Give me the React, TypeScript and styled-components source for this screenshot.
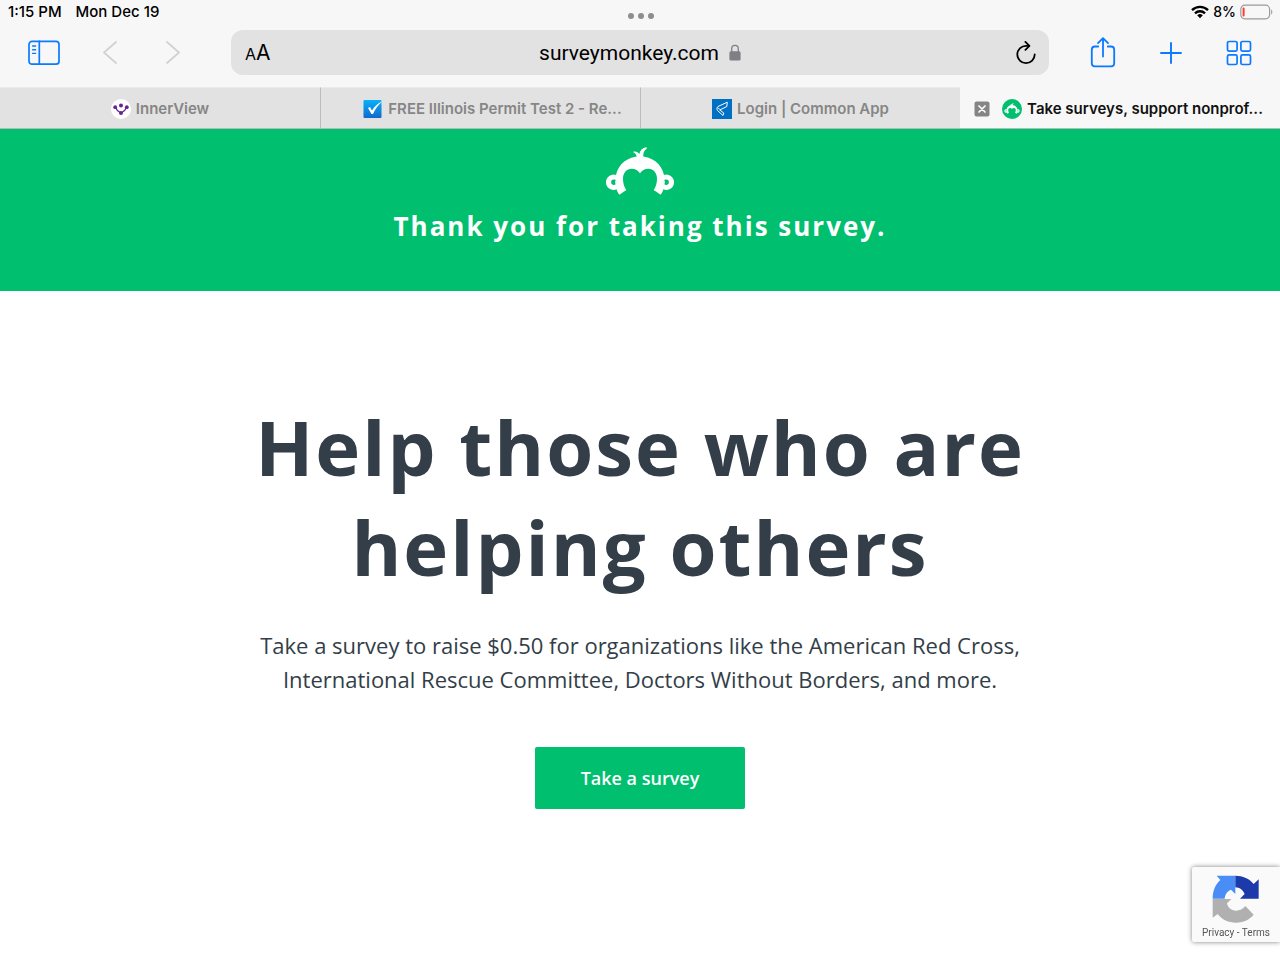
import React from "react";
import styled, { createGlobalStyle } from "styled-components";

const GlobalStyle = createGlobalStyle`
  * { box-sizing: border-box; }
  body {
    margin: 0;
    background: #ffffff;
    color: #333e48;
    font-family: "Open Sans", "Noto Sans", sans-serif;
  }
  button { font: inherit; border: 0; padding: 0; cursor: pointer; }
  svg { flex: none; }
`;

const uiFont = `Inter, "Liberation Sans", sans-serif`;

const Page = styled.div`
  display: flex;
  flex-direction: column;
  min-height: 100vh;
`;

const Chrome = styled.header`
  background: #f7f7f7;
  font-family: ${uiFont};
  color: #000000;
`;

const StatusBar = styled.div`
  display: grid;
  grid-template-columns: 1fr auto 1fr;
  align-items: center;
  height: 24px;
  padding: 0 7px 0 8px;
  font-size: 15px;
  font-weight: 500;
  line-height: 24px;
`;

const StatusGroup = styled.div<{ $end?: boolean }>`
  display: flex;
  align-items: center;
  justify-content: ${(p) => (p.$end ? "flex-end" : "flex-start")};
  gap: ${(p) => (p.$end ? "4px" : "14px")};
`;

const BatteryLevel = styled.span`
  font-size: 14px;
`;

const MultitaskDots = styled.button`
  display: flex;
  align-self: end;
  gap: 4px;
  padding-bottom: 5px;
  background: none;
`;

const Dot = styled.span`
  width: 6px;
  height: 6px;
  border-radius: 50%;
  background: #8e8e8e;
`;

const Toolbar = styled.div`
  display: grid;
  grid-template-columns: 231px 1fr 231px;
  align-items: center;
  padding: 6px 0 12px;
`;

const ToolGroup = styled.nav<{ $end?: boolean }>`
  display: flex;
  align-items: center;
  justify-content: ${(p) => (p.$end ? "flex-end" : "flex-start")};
  gap: ${(p) => (p.$end ? "43px" : "36px")};
  padding: 0 28px;
`;

const ToolButton = styled.button<{ $muted?: boolean }>`
  display: flex;
  background: none;
  color: ${(p) => (p.$muted ? "#d2d2d2" : "#0a7aff")};
`;

const AddressBar = styled.form`
  display: grid;
  grid-template-columns: 1fr auto 1fr;
  align-items: center;
  height: 45px;
  padding: 0 13px;
  border-radius: 12px;
  background: #e2e2e2;
`;

const TextSizeButton = styled.button`
  justify-self: start;
  padding: 2px 0 0 1px;
  background: none;
  color: #000000;
  font-size: 21px;
  line-height: 24px;
`;

const SmallLetter = styled.span`
  font-size: 16px;
`;

const Address = styled.label`
  display: flex;
  align-items: center;
  gap: 10px;
`;

const AddressInput = styled.input`
  field-sizing: content;
  padding: 0;
  border: 0;
  outline: 0;
  background: none;
  color: #000000;
  font-family: Roboto, sans-serif;
  font-size: 21px;
  line-height: 28px;
`;

const ReloadButton = styled.button`
  display: flex;
  justify-self: end;
  background: none;
`;

const TabStrip = styled.div`
  display: grid;
  grid-template-columns: repeat(4, 1fr);
  border-bottom: 1px solid #b4b9b6;
`;

const Tab = styled.div<{ $active?: boolean }>`
  display: flex;
  align-items: center;
  justify-content: center;
  height: 41px;
  padding: 2px 12px 0;
  background: ${(p) => (p.$active ? "#f7f7f7" : "#e2e2e2")};
  border-top: 1px solid ${(p) => (p.$active ? "#f7f7f7" : "#ebebeb")};

  &:not(:first-child) {
    border-left: 1px solid ${(p) => (p.$active ? "#f7f7f7" : "#bcbcbc")};
  }
`;

const CloseSlot = styled.span`
  display: flex;
  flex: none;
  width: 28px;
`;

const CloseButton = styled.button`
  display: flex;
  background: none;
`;

const TabLabel = styled.button<{ $active?: boolean; $long?: boolean }>`
  display: flex;
  align-items: center;
  gap: 5px;
  padding-right: ${(p) => (p.$long ? "4px" : "0")};
  background: none;
  color: ${(p) => (p.$active ? "#111111" : "#868686")};
  font-size: 15px;
  font-weight: 600;
  line-height: 20px;
  white-space: nowrap;
`;

const Banner = styled.section`
  display: flex;
  flex-direction: column;
  align-items: center;
  gap: 13px;
  padding: 18px 24px 47px;
  background: #00bf6f;
  color: #ffffff;
`;

const BannerText = styled.p`
  margin: 0;
  font-size: 26px;
  font-weight: 700;
  line-height: 36px;
  letter-spacing: 2px;
  text-align: center;
`;

const Main = styled.main`
  display: flex;
  flex-direction: column;
  align-items: center;
  padding: 106px 24px 48px;
  text-align: center;
`;

const Headline = styled.h1`
  max-width: 820px;
  margin: 0;
  font-size: 76px;
  font-weight: 700;
  line-height: 100px;
  letter-spacing: 2px;
`;

const Lead = styled.p`
  max-width: 780px;
  margin: 31px 0 51px;
  font-size: 22px;
  line-height: 34px;
`;

const PrimaryButton = styled.button`
  width: 210px;
  height: 62px;
  border-radius: 2px;
  background: #00bf6f;
  color: #ffffff;

  && {
    font-size: 18px;
    font-weight: 600;
  }
`;

const CaptchaBadge = styled.aside`
  position: fixed;
  right: 0;
  bottom: 18px;
  display: flex;
  flex-direction: column;
  align-items: center;
  width: 88px;
  height: 75px;
  padding-top: 8px;
  border-radius: 2px 0 0 2px;
  background: #fafafa;
  box-shadow: 0 0 5px #808080;
`;

const CaptchaLinks = styled.div`
  font-family: Roboto, sans-serif;
  font-size: 10px;
  line-height: 20px;
  color: #555555;
  white-space: pre;
`;

const CaptchaLink = styled.a`
  color: inherit;
  text-decoration: none;
`;

const MonkeyShape = () => (
  <>
    <path
      fillRule="evenodd"
      d="M118 180C113 174 111 169 110 164A23 23 0 1 1 108 121C115 88 143 66 180 65C217 66 245 88 252 121A23 23 0 1 1 250 164C249 169 247 174 242 180L221 166C228 155 231 145 231 132C231 114 220 102 205 102C194 102 185 107 180 116C175 107 166 102 155 102C140 102 129 114 129 132C129 145 132 155 139 166ZM95 137C98 134 103 134 107 136C105 141 105 145 107 149C103 152 98 151 95 148C93 145 93 140 95 137ZM265 137C262 134 257 134 253 136C255 141 255 145 253 149C257 152 262 151 265 148C267 145 267 140 265 137Z"
    />
    <path d="M170 68C170 60 166 55 159 52C166 49 174 52 178 58C180 47 187 40 199 38C201 39 201 41 199 43C191 48 189 57 190 68Z" />
  </>
);

const MonkeyLogo = () => (
  <svg width="68" height="48" viewBox="78 38 204 142" fill="#ffffff" role="img" aria-label="SurveyMonkey">
    <MonkeyShape />
  </svg>
);

const SidebarIcon = () => (
  <svg width="32" height="26" viewBox="0 0 32 26" fill="none" stroke="currentColor" strokeWidth="1.7" strokeLinecap="round">
    <rect x="1" y="1.4" width="30" height="22.8" rx="3" />
    <path d="M11.3 1.4v22.8" />
    <path d="M4.6 6h3M4.6 9.7h3M4.6 13.4h3" strokeWidth="1.4" />
  </svg>
);

const ChevronIcon = ({ flip }: { flip?: boolean }) => (
  <svg width="26" height="26" viewBox="0 0 26 26" fill="none" stroke="currentColor" strokeWidth="1.8" strokeLinecap="round" strokeLinejoin="round">
    <path d={flip ? "M9 2l12 10.5L9 23" : "M20 2L8 12.5 20 23"} />
  </svg>
);

const ShareIcon = () => (
  <svg width="26" height="32" viewBox="0 0 26 32" fill="none" stroke="currentColor" strokeWidth="1.8" strokeLinecap="round" strokeLinejoin="round">
    <path d="M8.2 9.5H5a3.2 3.2 0 0 0-3.2 3.2v13.5A3.2 3.2 0 0 0 5 29.4h16a3.2 3.2 0 0 0 3.2-3.2v-13.5a3.2 3.2 0 0 0-3.2-3.2h-3.2" />
    <path d="M13 19.5V1.3M8 6.1l5-5 5 5" />
  </svg>
);

const PlusIcon = () => (
  <svg width="24" height="24" viewBox="0 0 24 24" fill="none" stroke="currentColor" strokeWidth="1.9" strokeLinecap="round">
    <path d="M12 2v20M2 12h20" />
  </svg>
);

const GridIcon = () => (
  <svg width="26" height="26" viewBox="0 0 26 26" fill="none" stroke="currentColor" strokeWidth="1.7">
    <rect x="1.5" y="1.5" width="9.6" height="9.6" rx="1.6" />
    <rect x="14.9" y="1.5" width="9.6" height="9.6" rx="1.6" />
    <rect x="1.5" y="14.9" width="9.6" height="9.6" rx="1.6" />
    <rect x="14.9" y="14.9" width="9.6" height="9.6" rx="1.6" />
  </svg>
);

const LockIcon = () => (
  <svg width="12" height="17" viewBox="0 0 12 17" fill="#7f7f84">
    <path d="M2.7 8V4.7a3.3 3.3 0 0 1 6.6 0V8" fill="none" stroke="#7f7f84" strokeWidth="1.3" />
    <rect x="0.4" y="7.2" width="11.2" height="9.3" rx="1.5" />
  </svg>
);

const ReloadIcon = () => (
  <svg width="20" height="24" viewBox="0 0 20 24" fill="none" stroke="#000000" strokeWidth="1.8" strokeLinecap="round" strokeLinejoin="round">
    <path d="M13 4.8H10a8.7 8.7 0 1 0 8.7 8.7" />
    <path d="M9.4 0.9l4 4-4 4" />
  </svg>
);

const WifiIcon = () => (
  <svg width="18" height="14" viewBox="0 0 18 14" fill="none" stroke="#000000" strokeWidth="2.4">
    <path d="M1 5.1a11.5 11.5 0 0 1 16 0" />
    <path d="M4 8.3a7.2 7.2 0 0 1 10 0" />
    <path d="M9 13.2l-2.8-2.9a4 4 0 0 1 5.6 0z" fill="#000000" stroke="none" />
  </svg>
);

const BatteryIcon = () => (
  <svg width="33" height="16" viewBox="0 0 33 16">
    <rect x="0.8" y="1.2" width="28.8" height="13.6" rx="4" fill="none" stroke="#9b9b9b" strokeWidth="1.2" />
    <rect x="2.6" y="3.5" width="2" height="9" rx="1" fill="#ff3b30" />
    <path d="M31.2 5.5c1.5.6 1.5 4.4 0 5z" fill="#9b9b9b" />
  </svg>
);

const CloseIcon = () => (
  <svg width="16" height="16" viewBox="0 0 16 16">
    <rect x="0.5" y="0.5" width="15" height="15" rx="2" fill="#858585" />
    <path d="M5 5l6 6M11 5l-6 6" stroke="#ffffff" strokeWidth="1.7" strokeLinecap="round" />
  </svg>
);

const InnerViewIcon = () => (
  <svg width="20" height="20" viewBox="0 0 20 20" fill="#652394">
    <circle cx="10" cy="10" r="10" fill="#ffffff" />
    <path d="M4.5 8.5C5.5 11.5 7.5 12.5 10 14M15.5 8.5C14.5 11.5 12.5 12.5 10 14" stroke="#652394" strokeWidth="1.2" fill="none" />
    <circle cx="4.2" cy="8.2" r="1.9" />
    <circle cx="15.8" cy="8.2" r="1.9" />
    <circle cx="10" cy="6.4" r="2" />
    <circle cx="10" cy="14" r="2" />
  </svg>
);

const CheckFavicon = () => (
  <svg width="20" height="20" viewBox="0 0 20 20">
    <defs>
      <linearGradient id="checkFill" x1="0" y1="0" x2="0" y2="1">
        <stop offset="0" stopColor="#08b1fb" />
        <stop offset="1" stopColor="#1268cb" />
      </linearGradient>
    </defs>
    <rect x="0.5" y="1" width="18" height="18" rx="1" fill="url(#checkFill)" />
    <path d="M5 9l2-1 2 3.5C11.5 7.5 15 4 20 2c-4 3-7.5 7.5-10 13H8.5z" fill="#ffffff" />
  </svg>
);

const CommonAppIcon = () => (
  <svg width="20" height="20" viewBox="0 0 20 20" fill="none" stroke="#ffffff" strokeLinejoin="round">
    <rect width="20" height="20" fill="#0070c5" stroke="none" />
    <path d="M15.3 3.2L6 7.5C4.7 8.700 4.7 10.5 5.5 11.5L11 16.500l.8-2.500-4-3 7-3.500z" strokeWidth="1" />
    <path d="M5.2 8.5l3.600 2.500" strokeWidth="0.8" />
  </svg>
);

const MonkeyFavicon = () => (
  <svg width="20" height="20" viewBox="46 -17 268 268" fill="#ffffff">
    <circle cx="180" cy="117" r="134" fill="#00bf6f" />
    <MonkeyShape />
  </svg>
);

const CaptchaLogo = () => (
  <svg width="48" height="48" viewBox="100 60 140 144">
    <path d="M168 62H112L123 75C108 88 100 108 100 131H136C137 116 146 107 155 104L168 117Z" fill="#4a8df6" />
    <path d="M168 62C190 62 211 71 223 87L238 73V131H182L196 117C190 104 181 98 168 97Z" fill="#1c3aa9" />
    <path d="M100 132V188L115 177C128 194 147 203 169 203C191 203 211 194 223 179L198 153C191 162 181 167 170 167C155 167 145 157 143 145L156 132Z" fill="#b0b0b0" />
  </svg>
);

type TabInfo = {
  title: string;
  icon: React.ReactNode;
  long?: boolean;
  active?: boolean;
};

const tabs: TabInfo[] = [
  { title: "InnerView", icon: <InnerViewIcon /> },
  { title: "FREE Illinois Permit Test 2 - Re...", icon: <CheckFavicon />, long: true },
  { title: "Login | Common App", icon: <CommonAppIcon /> },
  { title: "Take surveys, support nonprof...", icon: <MonkeyFavicon />, long: true, active: true },
];

export default function App() {
  return (
    <Page>
      <GlobalStyle />
      <Chrome>
        <StatusBar>
          <StatusGroup>
            <span>1:15 PM</span>
            <span>Mon Dec 19</span>
          </StatusGroup>
          <MultitaskDots aria-label="Multitasking">
            <Dot />
            <Dot />
            <Dot />
          </MultitaskDots>
          <StatusGroup $end>
            <WifiIcon />
            <BatteryLevel>8%</BatteryLevel>
            <BatteryIcon />
          </StatusGroup>
        </StatusBar>
        <Toolbar>
          <ToolGroup aria-label="Navigation">
            <ToolButton aria-label="Sidebar"><SidebarIcon /></ToolButton>
            <ToolButton aria-label="Back" $muted><ChevronIcon /></ToolButton>
            <ToolButton aria-label="Forward" $muted><ChevronIcon flip /></ToolButton>
          </ToolGroup>
          <AddressBar onSubmit={(e) => e.preventDefault()}>
            <TextSizeButton type="button" aria-label="Text size">
              <SmallLetter>A</SmallLetter>A
            </TextSizeButton>
            <Address>
              <AddressInput aria-label="Address" defaultValue="surveymonkey.com" />
              <LockIcon />
            </Address>
            <ReloadButton type="button" aria-label="Reload"><ReloadIcon /></ReloadButton>
          </AddressBar>
          <ToolGroup $end aria-label="Page actions">
            <ToolButton aria-label="Share"><ShareIcon /></ToolButton>
            <ToolButton aria-label="New tab"><PlusIcon /></ToolButton>
            <ToolButton aria-label="Tab overview"><GridIcon /></ToolButton>
          </ToolGroup>
        </Toolbar>
        <TabStrip>
          {tabs.map((tab) => (
            <Tab key={tab.title} $active={tab.active}>
              {tab.long && (
                <CloseSlot>
                  {tab.active && <CloseButton aria-label="Close tab"><CloseIcon /></CloseButton>}
                </CloseSlot>
              )}
              <TabLabel $active={tab.active} $long={tab.long}>
                {tab.icon}
                {tab.title}
              </TabLabel>
            </Tab>
          ))}
        </TabStrip>
      </Chrome>
      <Banner>
        <MonkeyLogo />
        <BannerText>Thank you for taking this survey.</BannerText>
      </Banner>
      <Main>
        <Headline>Help those who are helping others</Headline>
        <Lead>
          Take a survey to raise $0.50 for organizations like the American Red Cross,
          International Rescue Committee, Doctors Without Borders, and more.
        </Lead>
        <PrimaryButton>Take a survey</PrimaryButton>
      </Main>
      <CaptchaBadge>
        <CaptchaLogo />
        <CaptchaLinks>
          <CaptchaLink href="#privacy">Privacy</CaptchaLink>
          {" - "}
          <CaptchaLink href="#terms">Terms</CaptchaLink>
        </CaptchaLinks>
      </CaptchaBadge>
    </Page>
  );
}
